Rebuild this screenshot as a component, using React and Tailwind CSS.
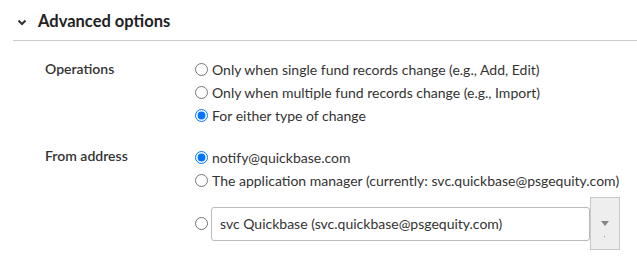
import { useState } from "react";

function Radio({ name, value, checked, onChange, children }) {
  return (
    <label className="flex items-center h-[23px] cursor-pointer">
      <input
        type="radio"
        name={name}
        value={value}
        checked={checked}
        onChange={() => onChange(value)}
        className="m-0 ml-[195px] mr-[4px] w-[13px] h-[13px] shrink-0"
      />
      {children}
    </label>
  );
}

export default function App() {
  const [ops, setOps] = useState("either");
  const [from, setFrom] = useState("notify");

  return (
    <div className="w-[637px] h-[257px] bg-white text-[#333] overflow-hidden font-['Lato',sans-serif]">
      {/* header */}
      <div className="flex items-center h-[41px] pt-[2px] ml-[13px] border-b border-[#ccc]">
        <svg width="10" height="7" viewBox="0 0 10 7" className="ml-[4px] mr-[11px] mt-[2px]">
          <path d="M1.5 1.5 L5 5 L8.5 1.5" fill="none" stroke="#333" strokeWidth="2" />
        </svg>
        <span className="text-[16.5px] font-bold text-[#222]">Advanced options</span>
      </div>

      {/* operations */}
      <div className="relative mt-[17px] text-[14px]">
        <div className="absolute left-[45px] top-[0px] font-semibold">Operations</div>
        <Radio name="ops" value="single" checked={ops === "single"} onChange={setOps}>
          Only when single fund records change (e.g., Add, Edit)
        </Radio>
        <Radio name="ops" value="multi" checked={ops === "multi"} onChange={setOps}>
          Only when multiple fund records change (e.g., Import)
        </Radio>
        <Radio name="ops" value="either" checked={ops === "either"} onChange={setOps}>
          For either type of change
        </Radio>
      </div>

      {/* from address */}
      <div className="relative mt-[19px] text-[14px]">
        <div className="absolute left-[45px] top-[-1px] font-semibold">From address</div>
        <Radio name="from" value="notify" checked={from === "notify"} onChange={setFrom}>
          notify@quickbase.com
        </Radio>
        <Radio name="from" value="manager" checked={from === "manager"} onChange={setFrom}>
          The application manager (currently: svc.quickbase@psgequity.com)
        </Radio>
        <div className="flex items-center mt-[5px]">
          <input
            type="radio"
            name="from"
            checked={from === "user"}
            onChange={() => setFrom("user")}
            className="m-0 ml-[195px] mr-[3px] w-[13px] h-[13px] shrink-0"
          />
          <div className="flex items-center w-[379px] h-[34px] border border-[#bbb] rounded-[3px] px-[8px]">
            svc Quickbase (svc.quickbase@psgequity.com)
          </div>
          <div className="relative w-[30px] h-[53px] bg-[#eeeeee] border border-[#c8c8c8] flex justify-center">
            <svg width="8" height="5" viewBox="0 0 8 5" className="mt-[23px]">
              <path d="M0 0 L8 0 L4 5 Z" fill="#888" />
            </svg>
            <span className="absolute left-[13px] top-[38px] w-[1px] h-[1px] bg-[#888]" />
          </div>
        </div>
      </div>
    </div>
  );
}
